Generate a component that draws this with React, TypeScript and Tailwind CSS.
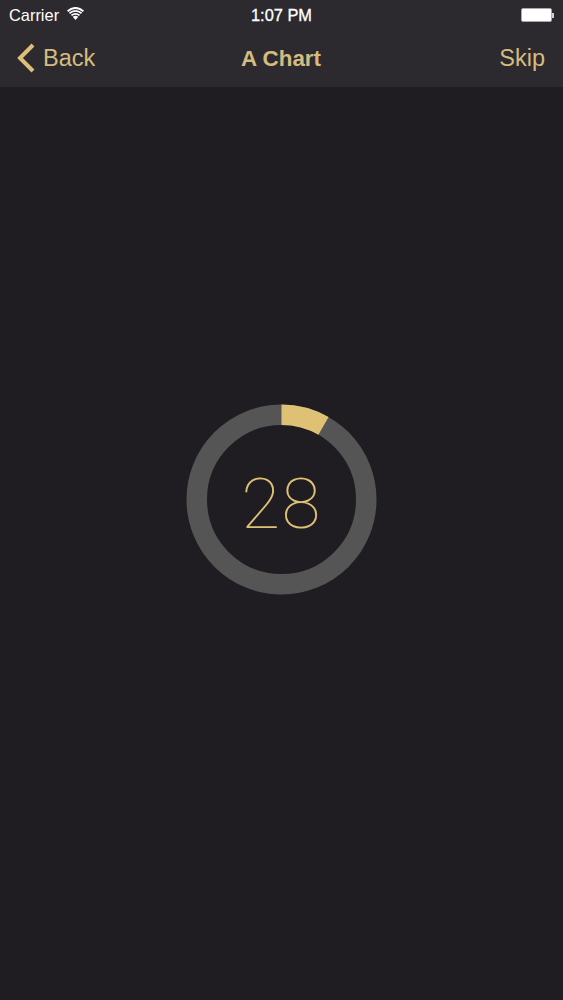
const NavBar = () => {
  return (
    <div className="h-[57px] flex items-center justify-between pl-[17px] pr-[18px] text-[#d4bc80] text-[23.5px]">
      <button className="flex items-center gap-[8px] w-[120px]">
        <svg width="18" height="30" viewBox="0 0 18 30" fill="none" className="mb-[2px]">
          <path d="M16 2 L3 15 L16 28" stroke="#dcbf78" strokeWidth="4" />
        </svg>
        <span>Back</span>
      </button>
      <span className="font-bold text-[22.4px]">A Chart</span>
      <button className="w-[120px] text-right">Skip</button>
    </div>
  );
};

const StatusBar = () => {
  return (
    <div className="h-[30px] flex items-center justify-between pl-[9px] pr-[9px] text-white text-[16.4px]">
      <div className="flex items-center gap-[8px] w-[120px]">
        <span>Carrier</span>
        <svg width="17" height="13" viewBox="0 0 17 13" fill="white" className="mb-[2px]">
          <path d="M8.5 13 L5.7 9.8 Q8.5 7.8 11.3 9.8 Z" />
          <path d="M3.9 7.8 L5 9 Q8.5 6.6 12 9 L13.1 7.8 Q8.5 4.2 3.9 7.8 Z" />
          <path d="M1.9 5.6 L3 6.9 Q8.5 2.7 14 6.9 L15.1 5.6 Q8.5 0.3 1.9 5.6 Z" />
          <path d="M0 3.5 L1.2 4.9 Q8.5 -1 15.8 4.9 L17 3.5 Q8.5 -3.6 0 3.5 Z" />
        </svg>
      </div>
      <span className="[-webkit-text-stroke:0.3px_white]">1:07 PM</span>
      <div className="flex items-center justify-end w-[120px]">
        <div className="w-[31px] h-[14px] rounded-[2px] border border-[#a9a9a9] bg-white" />
        <div className="w-[2px] h-[5px] bg-[#cfcfcf]" />
      </div>
    </div>
  );
};

const RingChart = () => {
  const r = 84.75;
  const circ = 2 * Math.PI * r;
  return (
    <div className="grid place-items-center w-[191px] h-[191px]">
      <svg width="191" height="191" viewBox="0 0 191 191" className="col-start-1 row-start-1">
        <circle cx="95.5" cy="95.5" r={r} fill="none" stroke="#555555" strokeWidth="20.5" />
        <circle
          cx="95.5"
          cy="95.5"
          r={r}
          fill="none"
          stroke="#dfc175"
          strokeWidth="20.5"
          strokeDasharray={`${circ * 0.0825} ${circ}`}
          transform="rotate(-90 95.5 95.5)"
        />
      </svg>
      <span className="col-start-1 row-start-1 mt-[8px] font-['Roboto',sans-serif] font-thin text-[71px] tracking-[1.5px] leading-none text-[#dfc175]">
        28
      </span>
    </div>
  );
};

export default function App() {
  return (
    <div className="w-[563px] h-[1000px] overflow-hidden bg-[#1f1d21] font-['Liberation_Sans',Arial,sans-serif]">
      <div className="bg-[#2c2a2e]">
        <StatusBar />
        <NavBar />
      </div>
      <div className="flex justify-center pt-[317px]">
        <RingChart />
      </div>
    </div>
  );
}
